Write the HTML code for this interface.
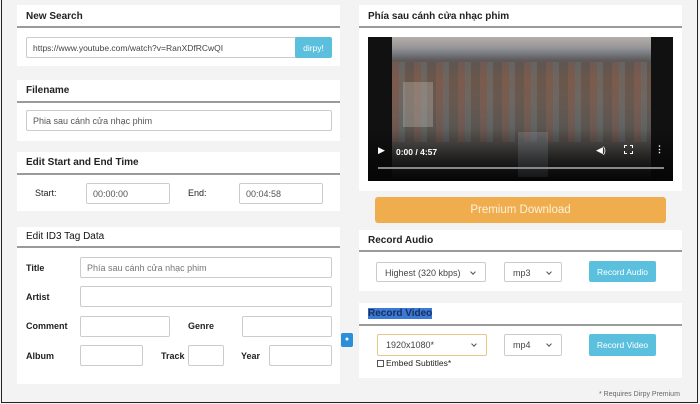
<!DOCTYPE html>
<html><head><meta charset="utf-8"><style>
*{box-sizing:border-box;margin:0;padding:0}
body{width:700px;height:404px;background:#f3f3f3;font-family:"Liberation Sans",sans-serif;font-size:9px;color:#333;position:relative;overflow:hidden}
.frame{position:absolute;left:1px;top:0;width:697px;height:403px;border:1px solid #222;border-top:none}
.p{position:absolute;background:#fff}
.h{position:absolute;left:0;right:0;top:0;height:23px;border-bottom:2px solid #9a9a9a;font-weight:bold;font-size:10px;padding:6px 0 0 9px;color:#222}
.a{position:absolute}
.in{position:absolute;border:1px solid #ccc;background:#fff;border-radius:2px;padding:5px 6px;font-size:9px;color:#555}
.lb{position:absolute;font-weight:bold;font-size:9px;color:#222}
.btn{position:absolute;background:#5bc0de;color:#fff;border-radius:2px;text-align:center;font-size:8.5px}
.sel{position:absolute;border:1px solid #ccc;background:#fff;border-radius:2px;font-size:9px;color:#444;padding:5px 0 0 8px}
.sel:after{content:"";position:absolute;right:10px;top:7px;width:3px;height:3px;border-right:1px solid #555;border-bottom:1px solid #555;transform:rotate(45deg)}
</style></head><body>
<div class="frame"></div>

<div class="p" style="left:17px;top:5px;width:323px;height:61px"><div class="h">New Search</div>
<div class="in" style="left:9px;top:32px;width:272px;height:21px;color:#444;font-size:8.5px">https://www.youtube.com/watch?v=RanXDfRCwQI</div>
<div class="btn" style="left:278px;top:32px;width:37px;height:21px;padding-top:6px">dirpy!</div></div>

<div class="p" style="left:17px;top:80px;width:323px;height:61px"><div class="h" style="padding-top:5px">Filename</div>
<div class="in" style="left:9px;top:30px;width:306px;height:21px">Phia sau cánh cửa nhạc phim</div></div>

<div class="p" style="left:17px;top:152px;width:323px;height:59px"><div class="h" style="padding-top:5px">Edit Start and End Time</div>
<div class="lb" style="left:18px;top:36px;font-weight:normal">Start:</div>
<div class="in" style="left:69px;top:31px;width:84px;height:21px">00:00:00</div>
<div class="lb" style="left:171px;top:36px;font-weight:normal">End:</div>
<div class="in" style="left:222px;top:31px;width:84px;height:21px">00:04:58</div></div>

<div class="p" style="left:17px;top:227px;width:323px;height:157px"><div class="h" style="font-weight:normal;color:#111;padding-top:4px;height:21px">Edit ID3 Tag Data</div>
<div class="lb" style="left:9px;top:36px">Title</div>
<div class="in" style="left:63px;top:30px;width:252px;height:21px;color:#777">Phía sau cánh cửa nhạc phim</div>
<div class="lb" style="left:9px;top:65px">Artist</div>
<div class="in" style="left:63px;top:59px;width:252px;height:21px"></div>
<div class="lb" style="left:9px;top:94px">Comment</div>
<div class="in" style="left:63px;top:89px;width:90px;height:21px"></div>
<div class="lb" style="left:171px;top:94px">Genre</div>
<div class="in" style="left:225px;top:89px;width:90px;height:21px"></div>
<div class="lb" style="left:9px;top:124px">Album</div>
<div class="in" style="left:63px;top:118px;width:63px;height:21px"></div>
<div class="lb" style="left:144px;top:124px">Track</div>
<div class="in" style="left:171px;top:118px;width:36px;height:21px"></div>
<div class="lb" style="left:224px;top:124px">Year</div>
<div class="in" style="left:252px;top:118px;width:63px;height:21px"></div></div>

<div class="a" style="left:341px;top:333px;width:12px;height:14px;background:#2a8fd8;border-radius:2px;color:#fff;font-size:7px;text-align:center;line-height:14px">●</div>

<div class="p" style="left:359px;top:5px;width:323px;height:186px"><div class="h">Phía sau cánh cửa nhạc phim</div>
<div class="a" style="left:9px;top:32px;width:305px;height:144px;background:#111">
<div class="a" style="left:24px;top:0;width:259px;height:144px;background:linear-gradient(180deg,#b3aeab 0%,#9a9798 7%,#7b7f86 11%,#5e5a58 16%,#6e5b4f 30%,#6a5d55 45%,#5d5a56 60%,#4e4b49 75%,#2a2a2a 90%,#111 100%)"></div>
<div class="a" style="left:24px;top:25px;width:259px;height:80px;background:repeating-linear-gradient(90deg,rgba(160,90,70,.25) 0 7px,rgba(120,140,150,.2) 7px 13px,rgba(90,70,60,.2) 13px 22px)"></div>
<div class="a" style="left:35px;top:45px;width:30px;height:45px;background:rgba(190,185,180,.35)"></div>
<div class="a" style="left:150px;top:95px;width:30px;height:45px;background:rgba(140,150,160,.35)"></div>
<div class="a" style="left:0;top:92px;width:305px;height:52px;background:linear-gradient(180deg,rgba(0,0,0,0),rgba(0,0,0,.7))"></div>
<div class="a" style="left:10px;top:108px;color:#fff;font-size:9px">▶</div>
<div class="a" style="left:28px;top:110px;color:#fff;font-weight:bold;font-size:8.5px">0:00 / 4:57</div>
<div class="a" style="left:228px;top:108px;color:#fff;font-size:9px">◀)</div>
<div class="a" style="left:256px;top:108px;width:9px;height:9px;border:1.5px dashed #fff"></div>
<div class="a" style="left:287px;top:107px;color:#fff;font-size:9px;font-weight:bold">⋮</div>
<div class="a" style="left:10px;top:130px;width:286px;height:2px;background:#888"></div>
</div></div>

<div class="a" style="left:375px;top:197px;width:291px;height:26px;background:#f0ad4e;border-radius:3px;color:#fdf0dc;font-size:11.5px;text-align:center;padding-top:7px">Premium Download</div>

<div class="p" style="left:359px;top:230px;width:323px;height:61px"><div class="h" style="padding-top:5px;height:22px">Record Audio</div>
<div class="sel" style="left:17px;top:32px;width:110px;height:20px">Highest (320 kbps)</div>
<div class="sel" style="left:145px;top:32px;width:58px;height:20px">mp3</div>
<div class="btn" style="left:230px;top:31px;width:67px;height:21px;padding-top:6px">Record Audio</div></div>

<div class="p" style="left:359px;top:303px;width:323px;height:75px"><div class="h" style="padding-top:5px;height:23px"><span style="background:#3b78d8;color:#1a2f57">Record Video</span></div>
<div class="sel" style="left:18px;top:31px;width:110px;height:22px;border-color:#e8c88a">1920x1080*</div>
<div class="sel" style="left:145px;top:31px;width:58px;height:22px">mp4</div>
<div class="btn" style="left:230px;top:31px;width:67px;height:22px;padding-top:6px">Record Video</div>
<div class="a" style="left:18px;top:55px;font-size:8.5px;color:#222"><span style="display:inline-block;width:7px;height:7px;border:1px solid #555;vertical-align:-1px;margin-right:2px"></span>Embed Subtitles*</div></div>

<div class="a" style="left:599px;top:391px;font-size:7px;color:#666">* Requires Dirpy Premium</div>
</body></html>
